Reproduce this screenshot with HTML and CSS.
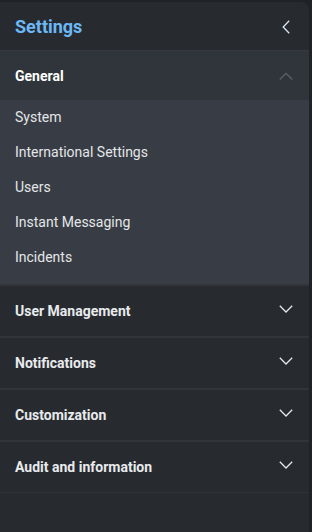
FILE: index.html
```html
<!DOCTYPE html>
<html>
<head>
<meta charset="utf-8">
<link rel="stylesheet" href="styles.css">
</head>
<body>
<div class="panel">
  <div class="header">
    <span class="title">Settings</span>
    <svg class="back" width="8" height="14" viewBox="0 0 8 14"><path d="M7.2 0.8 L1.2 7 L7.2 13.2" fill="none" stroke="#d6e6f5" stroke-width="1.3"/></svg>
  </div>
  <div class="section open">
    <div class="sec-head">
      <span>General</span>
      <svg class="chev up" width="14" height="8" viewBox="0 0 14 8"><path d="M0.8 7.5 L7 1.3 L13.2 7.5" fill="none" stroke="#5c6168" stroke-width="1.3"/></svg>
    </div>
    <ul class="items">
      <li>System</li>
      <li>International Settings</li>
      <li>Users</li>
      <li>Instant Messaging</li>
      <li>Incidents</li>
    </ul>
  </div>
  <div class="section">
    <div class="sec-head">
      <span>User Management</span>
      <svg class="chev" width="14" height="8" viewBox="0 0 14 8"><path d="M0.8 0.8 L7 7 L13.2 0.8" fill="none" stroke="#e6e8ea" stroke-width="1.3"/></svg>
    </div>
  </div>
  <div class="section">
    <div class="sec-head">
      <span>Notifications</span>
      <svg class="chev" width="14" height="8" viewBox="0 0 14 8"><path d="M0.8 0.8 L7 7 L13.2 0.8" fill="none" stroke="#e6e8ea" stroke-width="1.3"/></svg>
    </div>
  </div>
  <div class="section">
    <div class="sec-head">
      <span>Customization</span>
      <svg class="chev" width="14" height="8" viewBox="0 0 14 8"><path d="M0.8 0.8 L7 7 L13.2 0.8" fill="none" stroke="#e6e8ea" stroke-width="1.3"/></svg>
    </div>
  </div>
  <div class="section last">
    <div class="sec-head">
      <span>Audit and information</span>
      <svg class="chev" width="14" height="8" viewBox="0 0 14 8"><path d="M0.8 0.8 L7 7 L13.2 0.8" fill="none" stroke="#e6e8ea" stroke-width="1.3"/></svg>
    </div>
  </div>
</div>
</body>
</html>
```
FILE: styles.css
```css
html, body {
  margin: 0;
  padding: 0;
  height: 100%;
  background: #1f2226;
  font-family: Roboto, "Liberation Sans", sans-serif;
}
body {
  padding-top: 2px;
  box-sizing: border-box;
}
.panel {
  width: 309px;
  height: 100%;
  background: #272b30;
  border-top-right-radius: 8px;
  overflow: hidden;
}
.header {
  height: 48px;
  display: flex;
  align-items: center;
  justify-content: space-between;
  padding: 0 19px 0 15px;
  border-bottom: 1px solid #363a40;
}
.title {
  color: #6cb8f6;
  font-size: 18px;
  font-weight: bold;
}
.back { display: block; margin-top: 1px; }
.section {
  border-bottom: 2px solid #31353a;
}
.section.last { border-bottom: 1px solid #2f3338; }
.sec-head {
  height: 50px;
  display: flex;
  align-items: center;
  justify-content: space-between;
  padding: 0 16px 0 15px;
  color: #e8eaec;
  font-size: 14px;
  font-weight: bold;
}
.open .sec-head {
  height: 49px;
  background: #30353b;
  color: #ffffff;
}
.chev { display: block; margin-top: -4px; }
.chev.up { margin-top: 0; }
.items {
  list-style: none;
  margin: 0;
  padding: 0 0 9px;
  background: #383d45;
}
.items li {
  height: 35px;
  line-height: 34px;
  padding-left: 15px;
  color: #e4e6e8;
  font-size: 14px;
}
```
